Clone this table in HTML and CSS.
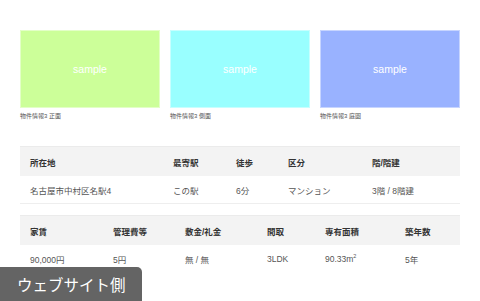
FILE: index.html
```html
<!DOCTYPE html>
<html lang="ja">
<head>
<meta charset="utf-8">
<link rel="stylesheet" href="styles.css">
</head>
<body>
<main class="page">
  <section class="gallery">
    <figure class="photo">
      <div class="photo-img green">sample</div>
      <figcaption class="caption">物件情報3 正面</figcaption>
    </figure>
    <figure class="photo">
      <div class="photo-img cyan">sample</div>
      <figcaption class="caption">物件情報3 側面</figcaption>
    </figure>
    <figure class="photo">
      <div class="photo-img blue">sample</div>
      <figcaption class="caption">物件情報3 庭園</figcaption>
    </figure>
  </section>

  <table class="spec spec-1">
    <colgroup>
      <col class="c143"><col class="c63"><col class="c52"><col class="c84"><col>
    </colgroup>
    <thead>
      <tr><th>所在地</th><th>最寄駅</th><th>徒歩</th><th>区分</th><th>階/階建</th></tr>
    </thead>
    <tbody>
      <tr><td>名古屋市中村区名駅4</td><td>この駅</td><td>6分</td><td>マンション</td><td>3階 / 8階建</td></tr>
    </tbody>
  </table>

  <table class="spec spec-2">
    <colgroup>
      <col class="c83"><col class="c72"><col class="c82"><col class="c58"><col class="c80"><col>
    </colgroup>
    <thead>
      <tr><th>家賃</th><th>管理費等</th><th>敷金/礼金</th><th>間取</th><th>専有面積</th><th>築年数</th></tr>
    </thead>
    <tbody>
      <tr><td>90,000円</td><td>5円</td><td>無 / 無</td><td>3LDK</td><td>90.33m<sup>2</sup></td><td>5年</td></tr>
    </tbody>
  </table>
</main>
<div class="badge">ウェブサイト側</div>
</body>
</html>
```
FILE: styles.css
```css
html, body {
  margin: 0;
  padding: 0;
  background: #fff;
}
body {
  font-family: "Liberation Sans", "Noto Sans CJK JP", sans-serif;
  color: #555;
  width: 480px;
  height: 301px;
  overflow: hidden;
}
.page {
  padding: 30px 20px 0 20px;
  width: 440px;
}
.gallery {
  display: flex;
  gap: 10px;
}
.photo {
  margin: 0;
  width: 140px;
}
.photo-img {
  box-sizing: border-box;
  height: 78px;
  display: flex;
  align-items: center;
  justify-content: center;
  color: #fff;
  font-size: 10.5px;
  border: 1px solid rgba(255,255,255,0.45);
}
.green { background: #ccff99; }
.cyan { background: #99ffff; }
.blue { background: #99b2ff; }
.caption {
  margin-top: 5px;
  font-size: 6px;
  line-height: 7px;
  color: #555;
}
.spec {
  width: 440px;
  border-collapse: collapse;
  table-layout: fixed;
  font-size: 8.5px;
}
.spec-1 { margin-top: 26px; }
.spec-2 { margin-top: 11px; }
.spec th, .spec td {
  text-align: left;
  padding: 0 0 0 10px;
  white-space: nowrap;
}
.spec th {
  background: #f3f3f3;
  color: #333;
  font-weight: bold;
  height: 29px;
  border-top: 1px solid #ebebeb;
}
.spec td {
  height: 27px;
  color: #555;
  border-bottom: 1px solid #eeeeee;
}
.spec-2 td { border-bottom: none; }
.spec sup {
  font-size: 5.5px;
  vertical-align: 4px;
  line-height: 0;
}
.c143 { width: 143px; }
.c63 { width: 63px; }
.c52 { width: 52px; }
.c84 { width: 84px; }
.c83 { width: 83px; }
.c72 { width: 72px; }
.c82 { width: 82px; }
.c58 { width: 58px; }
.c80 { width: 80px; }
.badge {
  position: absolute;
  left: 0;
  bottom: 0;
  width: 142px;
  height: 34px;
  box-sizing: border-box;
  padding-left: 17px;
  display: flex;
  align-items: center;
  background: #646464;
  color: #fff;
  font-size: 15.5px;
  border-top-right-radius: 5px;
  font-family: "Noto Sans CJK JP", sans-serif;
}
```
